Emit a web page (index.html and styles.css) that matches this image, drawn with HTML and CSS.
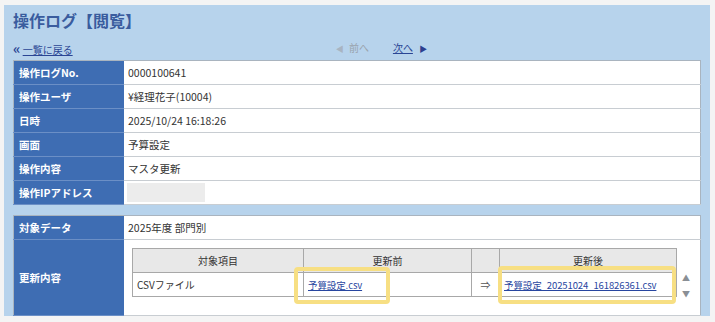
FILE: index.html
```html
<!DOCTYPE html>
<html lang="ja">
<head>
<meta charset="utf-8">
<link rel="stylesheet" href="styles.css">
</head>
<body>
<div class="panel">
  <h1 class="title">操作ログ【閲覧】</h1>
  <div class="nav">
    <a class="back"><span class="dbl">&laquo;</span> <span class="u">一覧に戻る</span></a>
    <div class="pager">
      <span class="prev"><span class="tri">&#9664;</span> 前へ</span>
      <span class="next"><span class="u">次へ</span> <span class="tri">&#9654;</span></span>
    </div>
  </div>
  <table class="info">
    <tr><th>操作ログNo.</th><td>0000100641</td></tr>
    <tr><th>操作ユーザ</th><td>¥経理花子(10004)</td></tr>
    <tr><th>日時</th><td>2025/10/24 16:18:26</td></tr>
    <tr><th>画面</th><td>予算設定</td></tr>
    <tr><th>操作内容</th><td>マスタ更新</td></tr>
    <tr><th>操作IPアドレス</th><td><span class="blur"></span></td></tr>
  </table>
  <table class="info second">
    <tr><th>対象データ</th><td>2025年度 部門別</td></tr>
    <tr class="tall"><th>更新内容</th><td class="detail-cell">
      <div class="detail">
        <table class="inner">
          <colgroup><col class="w1"><col class="w2"><col class="w3"><col class="w4"></colgroup>
          <tr><th>対象項目</th><th>更新前</th><th></th><th>更新後</th></tr>
          <tr><td>CSVファイル</td><td class="mark"><a class="link">予算設定.csv</a><span class="hl hl1"></span></td><td class="arrow">&rArr;</td><td class="mark"><a class="link">予算設定_20251024_161826361.csv</a><span class="hl hl2"></span></td></tr>
        </table>
        <div class="scroll"><span>&#9650;</span><span>&#9660;</span></div>
      </div>
    </td></tr>
  </table>
</div>
</body>
</html>
```
FILE: styles.css
```css
html, body { margin: 0; padding: 0; }
body {
  background: #f4f4f4;
  font-family: "Noto Sans CJK JP", "Noto Sans", sans-serif;
  color: #222;
  width: 715px;
  height: 322px;
  overflow: hidden;
}
.panel {
  margin: 5px 5px 0 4px;
  height: 311px;
  background: #b7d3ec;
  padding: 0 9px;
  box-sizing: border-box;
}
.title {
  margin: 0;
  padding-top: 4px;
  font-size: 16px;
  line-height: 23px;
  font-weight: bold;
  color: #3a5c9e;
}
.nav {
  height: 28px;
  box-sizing: border-box;
  padding-top: 8px;
  display: flex;
  align-items: flex-start;
  font-size: 10px;
  line-height: 16px;
}
.back { color: #2a4594; }
.dbl { font-weight: bold; font-size: 14px; color: #2a4594; }
.u { text-decoration: underline; }
.pager {
  margin-left: 263px;
  display: flex;
  gap: 24px;
}
.prev { color: #9aa3ad; }
.next { color: #2a4594; }
.tri { font-size: 8px; }
.next .tri { color: #2c3f8f; margin-left: 4px; }
.prev .tri { color: #a8b4c2; margin-right: 3px; }
table { border-collapse: collapse; }
.info {
  width: 688px;
  background: #fff;
  border: 1px solid #a9b4bf;
  font-size: 10.5px;
}
.info tr { height: 24px; }
.info th {
  width: 100px;
  background: #3e6db3;
  color: #fff;
  text-align: left;
  font-weight: bold;
  padding: 0 5px;
  border-bottom: 1px solid #6b8fc6;
  white-space: nowrap;
}
.info td {
  padding: 0 4px;
  border-bottom: 1px solid #c8cdd2;
  color: #333;
}
.blur {
  display: inline-block;
  width: 78px;
  height: 19px;
  background: #ececec;
  vertical-align: middle;
  margin-left: -1px;
}
.second { margin-top: 10px; }
.second tr.tall { height: 75px; }
.info td.detail-cell { padding: 0; }
.detail {
  display: flex;
  padding: 8px 0 0 8px;
  height: 75px;
  box-sizing: border-box;
}
.inner {
  table-layout: fixed;
  width: 544px;
  border: 1px solid #a8a8a8;
  font-size: 10px;
  align-self: flex-start;
  flex: none;
}
.w1 { width: 171px; }
.w2 { width: 168px; }
.w3 { width: 28px; }
.w4 { width: 177px; }
.inner tr { height: 24px; }
.inner th {
  background: #e8e8e8;
  font-weight: normal;
  color: #333;
  border: 1px solid #a8a8a8;
  text-align: center;
  padding: 0;
}
.inner td {
  border: 1px solid #a8a8a8;
  padding: 0 4px;
  background: #fff;
  white-space: nowrap;
}
.inner td.arrow { padding: 0; text-align: center; color: #555; }
.mark { position: relative; }
.link { color: #2846a0; text-decoration: underline; font-size: 9.5px; letter-spacing: -0.1px; }
.hl {
  position: absolute;
  border: 4px solid #f7df83;
  border-radius: 4px;
  box-sizing: border-box;
}
.hl1 { left: -10px; top: -6px; width: 96px; height: 37px; }
.hl2 { left: -2px; top: -7px; width: 178px; height: 38px; }
.scroll {
  display: flex;
  flex-direction: column;
  justify-content: space-between;
  margin: 26px 0 0 5px;
  height: 24px;
  font-size: 8px;
  color: #8a8f95;
  line-height: 8px;
}
```
